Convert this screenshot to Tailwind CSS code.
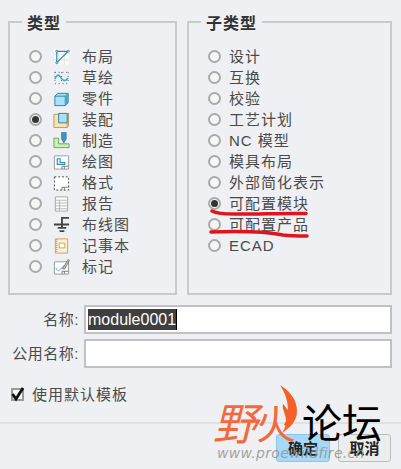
<!DOCTYPE html>
<html lang="zh-CN">
<head>
  <meta charset="UTF-8" />
  <meta name="viewport" content="width=device-width, initial-scale=1" />
  <title>新建</title>
  <script src="https://cdn.jsdelivr.net/npm/@tailwindcss/browser@4"></script>
</head>
<body class="bg-[#eef0f3]">
<div class="relative w-[401px] h-[469px] overflow-hidden bg-[#eef0f3] text-[#4a4a4a] text-[15px] leading-[21px] font-['Liberation_Sans','Noto_Sans_CJK_SC',sans-serif]">

  <!-- Type groups -->
  <div class="flex gap-[10px] pl-[8px] pr-[9px] pt-[12px]">
    <fieldset class="w-[169px] h-[283px] border-2 border-[#c8cacc] pl-[19px] pt-[14px]">
      <legend class="ml-[-7px] px-[5px] pt-[4px] text-[16px] leading-[16px] tracking-[1px] font-bold text-[#333]">类型</legend>
      <div class="flex flex-col">
        <div class="flex items-center h-[21px]">
          <span class="w-[13px] h-[13px] rounded-full border-2 border-[#aaa] bg-[#f6f6f6]"></span>
          <svg class="ml-[11px] w-[17px] h-[18px]" viewBox="0 0 18 18"><path d="M1 1h16v16H1z" fill="#fafafa"/><path d="M6 1v16M12 1v16M1 6h16M1 12h16" stroke="#e2e2e2" fill="none"/><path d="M4 3h12L4 15z" fill="none" stroke="#2a87ad" stroke-width="1.2"/><circle cx="4" cy="3" r="1.2" fill="#9fd9ee" stroke="#1d6f92" stroke-width=".6"/><circle cx="16" cy="3" r="1.2" fill="#9fd9ee" stroke="#1d6f92" stroke-width=".6"/><circle cx="4" cy="15" r="1.2" fill="#9fd9ee" stroke="#1d6f92" stroke-width=".6"/></svg>
          <span class="ml-[12px] tracking-[1px]">布局</span>
        </div>
        <div class="flex items-center h-[21px]">
          <span class="w-[13px] h-[13px] rounded-full border-2 border-[#aaa] bg-[#f6f6f6]"></span>
          <svg class="ml-[11px] w-[17px] h-[18px]" viewBox="0 0 18 18"><path d="M2 3h14M2 15h14M2 3v12M9 3v12M16 3v12" stroke="#555" stroke-dasharray="1 3" fill="none"/><path d="M2 10c2-5 4-5 6-2s4 6 8 1" fill="none" stroke="#3ba7d0" stroke-width="1.6"/></svg>
          <span class="ml-[12px] tracking-[1px]">草绘</span>
        </div>
        <div class="flex items-center h-[21px]">
          <span class="w-[13px] h-[13px] rounded-full border-2 border-[#aaa] bg-[#f6f6f6]"></span>
          <svg class="ml-[11px] w-[17px] h-[18px]" viewBox="0 0 18 18"><path d="M2 6l3-3h11v10l-3 3H2z" fill="#a9e2f5" stroke="#2a7fa3"/><path d="M2 6h11v10M13 6l3-3" fill="none" stroke="#2a7fa3"/><path d="M13 6l3-3v10l-3 3z" fill="#4ea6cb"/></svg>
          <span class="ml-[12px] tracking-[1px]">零件</span>
        </div>
        <div class="flex items-center h-[21px]">
          <span class="flex items-center justify-center w-[13px] h-[13px] rounded-full border-2 border-[#aaa] bg-[#f6f6f6]"><span class="w-[7px] h-[7px] rounded-full bg-[#333]"></span></span>
          <svg class="ml-[11px] w-[17px] h-[18px]" viewBox="0 0 18 18"><path d="M1 3h14v14H1z" fill="#fbe3b4" stroke="#b9975b"/><path d="M15 3l1.500-1.500v13L15 17" fill="#d8bb85" stroke="#b9975b"/><path d="M6 2h9v10H6z" fill="#a9e2f5" stroke="#2a7fa3"/></svg>
          <span class="ml-[12px] tracking-[1px]">装配</span>
        </div>
        <div class="flex items-center h-[21px]">
          <span class="w-[13px] h-[13px] rounded-full border-2 border-[#aaa] bg-[#f6f6f6]"></span>
          <svg class="ml-[11px] w-[17px] h-[18px]" viewBox="0 0 18 18"><path d="M1 6h5v6h11v4H1z" fill="#cdeeb6" stroke="#6fa257"/><path d="M9 0h5v7l-2.500 4L9 7z" fill="#3b94c4" stroke="#1f6e99" stroke-width=".6"/></svg>
          <span class="ml-[12px] tracking-[1px]">制造</span>
        </div>
        <div class="flex items-center h-[21px]">
          <span class="w-[13px] h-[13px] rounded-full border-2 border-[#aaa] bg-[#f6f6f6]"></span>
          <svg class="ml-[11px] w-[17px] h-[18px]" viewBox="0 0 18 18"><path d="M1.500 2.500h15v14h-15z" fill="#fff" stroke="#999"/><path d="M4.500 5.500h3v4h5v2h-8z" fill="none" stroke="#2a8db5" stroke-width="1.200"/><path d="M9.500 16.500v-3h7M12 16.500v-3" fill="none" stroke="#777"/></svg>
          <span class="ml-[12px] tracking-[1px]">绘图</span>
        </div>
        <div class="flex items-center h-[21px]">
          <span class="w-[13px] h-[13px] rounded-full border-2 border-[#aaa] bg-[#f6f6f6]"></span>
          <svg class="ml-[11px] w-[17px] h-[18px]" viewBox="0 0 18 18"><path d="M1.500 2.500h15v14h-15z" fill="#fff" stroke="#444" stroke-dasharray="2 2"/><path d="M9.500 16.500v-3h7M12 16.500v-3" fill="none" stroke="#777"/></svg>
          <span class="ml-[12px] tracking-[1px]">格式</span>
        </div>
        <div class="flex items-center h-[21px]">
          <span class="w-[13px] h-[13px] rounded-full border-2 border-[#aaa] bg-[#f6f6f6]"></span>
          <svg class="ml-[11px] w-[17px] h-[18px]" viewBox="0 0 18 18"><path d="M2.500 1.500h13v15h-13z" fill="#fdfdfd" stroke="#a5a5a5"/><path d="M2.500 5h13M2.500 8h13M2.500 11h13M2.500 14h13M7 5v11" stroke="#b5b5b5" fill="none"/></svg>
          <span class="ml-[12px] tracking-[1px]">报告</span>
        </div>
        <div class="flex items-center h-[21px]">
          <span class="w-[13px] h-[13px] rounded-full border-2 border-[#aaa] bg-[#f6f6f6]"></span>
          <svg class="ml-[11px] w-[17px] h-[18px]" viewBox="0 0 18 18"><path d="M1 8.500h16M9.500 8.500V1.500h7.500M9.500 8.500v3M5 12h9M7 15.500h5" fill="none" stroke="#444" stroke-width="2"/></svg>
          <span class="ml-[12px] tracking-[1px]">布线图</span>
        </div>
        <div class="flex items-center h-[21px]">
          <span class="w-[13px] h-[13px] rounded-full border-2 border-[#aaa] bg-[#f6f6f6]"></span>
          <svg class="ml-[11px] w-[17px] h-[18px]" viewBox="0 0 18 18"><path d="M2.500 1.500h13v15h-13z" fill="#fdf0d2" stroke="#c5a25f"/><path d="M6.500 6h6v5h-6z" fill="#fff" stroke="#c5a25f"/><path d="M4 2v14" stroke="#777" stroke-dasharray="1 1"/></svg>
          <span class="ml-[12px] tracking-[1px]">记事本</span>
        </div>
        <div class="flex items-center h-[21px]">
          <span class="w-[13px] h-[13px] rounded-full border-2 border-[#aaa] bg-[#f6f6f6]"></span>
          <svg class="ml-[11px] w-[17px] h-[18px]" viewBox="0 0 18 18"><path d="M1.500 3.500h15v13h-15z" fill="#fff" stroke="#999"/><path d="M3 10c1 2 2 3 3 3 3-2 5-5 6-6" fill="none" stroke="#3ba7d0"/><path d="M10 11l6-10 1.500 1-5 9z" fill="#bbb" stroke="#666" stroke-width=".7"/><path d="M9.500 16.500v-3h7M12 16.500v-3" fill="none" stroke="#777"/></svg>
          <span class="ml-[12px] tracking-[1px]">标记</span>
        </div>
      </div>
    </fieldset>

    <fieldset class="w-[205px] h-[283px] border-2 border-[#c8cacc] pl-[19px] pt-[14px]">
      <legend class="ml-[-7px] px-[5px] pt-[4px] text-[16px] leading-[16px] tracking-[1px] font-bold text-[#333]">子类型</legend>
      <div class="flex flex-col">
        <div class="flex items-center h-[21px]"><span class="w-[13px] h-[13px] rounded-full border-2 border-[#aaa] bg-[#f6f6f6]"></span><span class="ml-[8px] tracking-[1px]">设计</span></div>
        <div class="flex items-center h-[21px]"><span class="w-[13px] h-[13px] rounded-full border-2 border-[#aaa] bg-[#f6f6f6]"></span><span class="ml-[8px] tracking-[1px]">互换</span></div>
        <div class="flex items-center h-[21px]"><span class="w-[13px] h-[13px] rounded-full border-2 border-[#aaa] bg-[#f6f6f6]"></span><span class="ml-[8px] tracking-[1px]">校验</span></div>
        <div class="flex items-center h-[21px]"><span class="w-[13px] h-[13px] rounded-full border-2 border-[#aaa] bg-[#f6f6f6]"></span><span class="ml-[8px] tracking-[1px]">工艺计划</span></div>
        <div class="flex items-center h-[21px]"><span class="w-[13px] h-[13px] rounded-full border-2 border-[#aaa] bg-[#f6f6f6]"></span><span class="ml-[8px] tracking-[1px]">NC 模型</span></div>
        <div class="flex items-center h-[21px]"><span class="w-[13px] h-[13px] rounded-full border-2 border-[#aaa] bg-[#f6f6f6]"></span><span class="ml-[8px] tracking-[1px]">模具布局</span></div>
        <div class="flex items-center h-[21px]"><span class="w-[13px] h-[13px] rounded-full border-2 border-[#aaa] bg-[#f6f6f6]"></span><span class="ml-[8px] tracking-[1px]">外部简化表示</span></div>
        <div class="flex items-center h-[21px]"><span class="flex items-center justify-center w-[13px] h-[13px] rounded-full border-2 border-[#aaa] bg-[#f6f6f6]"><span class="w-[7px] h-[7px] rounded-full bg-[#333]"></span></span><span class="ml-[8px] tracking-[1px]">可配置模块</span></div>
        <div class="flex items-center h-[21px]"><span class="w-[13px] h-[13px] rounded-full border-2 border-[#aaa] bg-[#f6f6f6]"></span><span class="ml-[8px] tracking-[1px]">可配置产品</span></div>
        <div class="flex items-center h-[21px]"><span class="w-[13px] h-[13px] rounded-full border-2 border-[#aaa] bg-[#f6f6f6]"></span><span class="ml-[8px] tracking-[1px]">ECAD</span></div>
      </div>
    </fieldset>
  </div>

  <!-- Name fields -->
  <div class="flex items-center mt-[10px] pr-[9px]">
    <label class="w-[79px] text-right tracking-[0.500px]">名称:</label>
    <div class="ml-[5px] flex-1 h-[29px] border-2 border-[#bfc1c3] bg-white flex items-center pl-[2px]">
      <span class="bg-[#3f3f3f] text-white text-[16px] leading-[21px]">module0001</span><span class="w-[1px] h-[21px] bg-black"></span>
    </div>
  </div>
  <div class="flex items-center mt-[5px] pr-[9px]">
    <label class="w-[79px] text-right tracking-[0.500px]">公用名称:</label>
    <div class="ml-[5px] flex-1 h-[29px] border-2 border-[#bfc1c3] bg-white"></div>
  </div>

  <!-- Default template -->
  <div class="flex items-center mt-[16px] pl-[11px]">
    <span class="flex items-center justify-center w-[13px] h-[13px] border-2 border-[#999] bg-[#f8f8f8]">
      <svg class="w-[13px] h-[13px] shrink-0 overflow-visible" viewBox="0 0 13 13"><path d="M1.500 6l3.500 5 7-11" fill="none" stroke="#111" stroke-width="2.800"/></svg>
    </span>
    <span class="ml-[8px] tracking-[1px]">使用默认模板</span>
  </div>

  <!-- Buttons -->
  <div class="mt-[17px] border-t-2 border-[#dfe1e3] flex justify-end gap-[8px] pt-[10px] pr-[10px]">
    <button class="w-[54px] h-[28px] rounded-[3px] border border-[#8cc6ec] bg-[#a6d8f8] text-[#222] text-[15px] font-bold">确定</button>
    <button class="w-[53px] h-[28px] rounded-[3px] border border-[#bcbcbc] bg-[#eceded] text-[#222] text-[15px] font-bold">取消</button>
  </div>

  <!-- Red pen marks over the list -->
  <svg class="absolute left-0 top-0 pointer-events-none" width="401" height="469" viewBox="0 0 401 469">
    <path d="M212 211c8 4 20 3 30 3 20 0 44-1 64-0.500" fill="none" stroke="#e0141c" stroke-width="3.500" stroke-linecap="round"/>
    <path d="M211 232c30-1 52-1 72 3 8 1 16 1 24 1" fill="none" stroke="#e0141c" stroke-width="3.500" stroke-linecap="round"/>
  </svg>

  <!-- Forum watermark -->
  <div class="absolute left-[213px] top-[401px] text-[44px] leading-[48px] text-[#f4693c] italic pointer-events-none">野</div>
  <div class="absolute left-[256px] top-[401px] text-[40px] leading-[48px] text-[#f4693c] pointer-events-none">火</div>
  <svg class="absolute left-[278px] top-[384px] pointer-events-none" width="22" height="50" viewBox="0 0 22 50"><path d="M2 1c10 6 17 15 17 26 0 10-7 17-15 22 4-6 5-12 3-18-1-4-3-7-2-11 2 2 3 4 5 6 0-9-3-17-8-25z" fill="#f4622a"/></svg>
  <div class="absolute left-[302px] top-[400px] text-[40px] leading-[48px] text-black pointer-events-none">论坛</div>
  <div class="absolute left-[217px] top-[443px] text-[14px] leading-[20px] tracking-[0.300px] italic text-[#8e8e8e]/80 font-['DejaVu_Sans',sans-serif] pointer-events-none">www.proewildfire.cn</div>
</div>
</body>
</html>
